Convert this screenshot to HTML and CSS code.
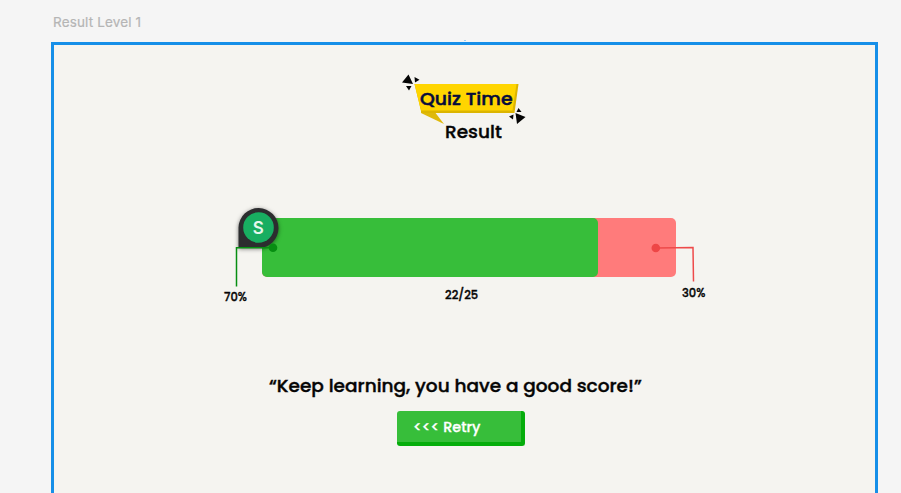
FILE: index.html
```html
<!DOCTYPE html>
<html lang="en">
<head>
<meta charset="utf-8">
<title>Result Level 1</title>
<link rel="stylesheet" href="styles.css">
</head>
<body>
<div class="frame-name">Result Level 1</div>
<main class="frame">
  <i class="frame-mark"></i>
  <header class="heading">
    <svg class="logo" width="128" height="54" viewBox="400 72 128 54">
      <path d="M421 111L434 111L444 124L421 113Z" fill="#dfb90b"/>
      <path d="M414.500 84L518.500 84L514.500 113L421.500 113Z" fill="#dcb500"/>
      <path d="M414.500 84L516.500 84L512.500 110.500L421 110.500Z" fill="#ffd500"/>
      <path d="M408.500 74.500L413 84L402 82.500ZM414.500 77L419.500 79.800L415 82.500ZM406 86L411.500 86L409 90.500ZM518.500 108L521.500 112L516.500 112ZM509 116.500L513.500 114.500L513 119.500ZM515.500 113L525.500 117L517 124Z" fill="#050505"/>
      <text class="logo-text" x="420" y="104.500" textLength="92.500" lengthAdjust="spacingAndGlyphs">Quiz Time</text>
    </svg>
    <h1 class="title">Result</h1>
  </header>

  <section class="chart">
    <div class="bar"><div class="bar-right"></div></div>
    <div class="labels">
      <span class="label label-right">70%</span>
      <span class="label label-score">22/25</span>
      <span class="label label-wrong">30%</span>
    </div>
    <svg class="callouts" width="490" height="100" viewBox="220 195 490 100">
      <path d="M238.500 248V227.500A20 20 0 1 1 258.500 248Z" fill="#2c2d2f" class="pin"/>
      <circle cx="258.500" cy="227.500" r="15.300" fill="#18ae61"/>
      <text class="pin-text" x="258.300" y="234" text-anchor="middle">S</text>
      <path d="M236.500 286.500V247.700H272" fill="none" stroke="#078e12" stroke-width="1.500"/>
      <circle cx="273" cy="247.800" r="4.300" fill="#078e12"/>
      <path d="M656 248L693 247.500L693.500 281.500" fill="none" stroke="#ee4a4a" stroke-width="1.500"/>
      <circle cx="655.800" cy="248" r="4.300" fill="#ee4646"/>
    </svg>
  </section>

  <p class="message">“Keep learning, you have a good score!”</p>
  <button class="retry" type="button">&lt;&lt;&lt; Retry</button>
</main>
</body>
</html>
```
FILE: styles.css
```css
* { box-sizing: border-box; }

body {
  margin: 0;
  height: 493px;
  overflow: hidden;
  background: #f5f5f5;
  color: #050505;
  font-family: Poppins, Inter, sans-serif;
}

.frame-name {
  height: 42px;
  padding: 14px 0 0 53px;
  color: #b5b5b5;
  font: 13.5px/17px Inter, sans-serif;
  letter-spacing: 0.15px;
  -webkit-text-stroke: 0.2px;
}

.frame {
  position: relative;
  width: 827px;
  height: 470px;
  margin-left: 51px;
  padding-top: 27px;
  border: 3px solid #168fe8;
  background: #f5f4f0;
}

.frame-mark {
  position: absolute;
  top: -5px;
  left: 410px;
  width: 2px;
  height: 1px;
  background: #9bd0f5;
}

.heading {
  width: 128px;
  margin-left: 346px;
}

.logo { display: block; }

.logo-text {
  font-size: 18.5px;
  font-weight: 500;
  fill: #050b3c;
  stroke: #050b3c;
  stroke-width: 0.5px;
}

.title {
  margin: -6px 0 0 45px;
  font-size: 18.5px;
  font-weight: 500;
  line-height: 24px;
  -webkit-text-stroke: 0.4px;
}

.chart {
  position: relative;
  width: 414px;
  margin: 74px 0 0 208px;
}

.bar {
  height: 59px;
  border-radius: 5px;
  background: #ff7b7b;
}

.bar-right {
  width: 336px;
  height: 59px;
  border-radius: 5px;
  background: #37be3a;
}

.labels {
  display: grid;
  grid-template-columns: 221px 237px 1fr;
  height: 32px;
  margin: 0 -30px 0 -38px;
}

.label {
  font-size: 11.5px;
  font-weight: 500;
  line-height: 14px;
  -webkit-text-stroke: 0.35px;
}

.label-right { padding-top: 13px; }
.label-score { padding-top: 11px; }
.label-wrong { padding-top: 9px; }

.callouts {
  position: absolute;
  top: -23px;
  left: -42px;
}

.pin { filter: drop-shadow(0 1px 2px rgba(0, 0, 0, 0.5)); }

.pin-text {
  font: 600 17px Inter, sans-serif;
  fill: #e6f7ed;
}

.message {
  margin: 64px 0 0 215px;
  font-size: 18.5px;
  font-weight: 500;
  line-height: 26px;
  white-space: nowrap;
  -webkit-text-stroke: 0.4px;
}

.retry {
  display: block;
  width: 128px;
  height: 35px;
  margin: 12px 0 0 343px;
  padding: 1px 0 0 16px;
  border: solid #05ad0b;
  border-width: 0 4px 4px 0;
  border-radius: 3px;
  background: #37be3a;
  color: #fff;
  font: 500 14.4px/20px Poppins, Inter, sans-serif;
  text-align: left;
  -webkit-text-stroke: 0.3px;
}
```
